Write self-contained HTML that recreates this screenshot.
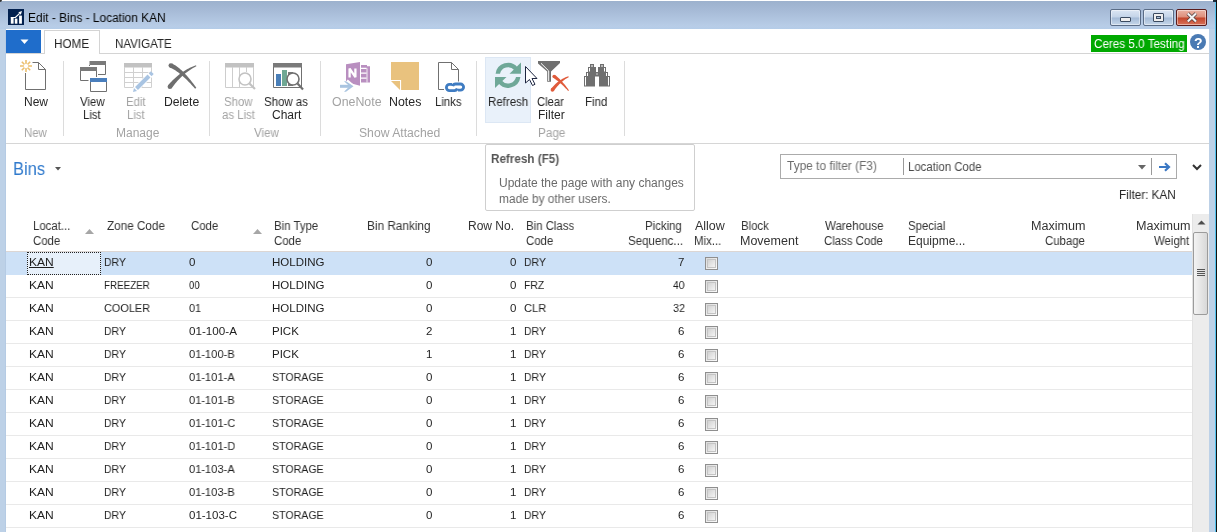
<!DOCTYPE html><html><head><meta charset="utf-8"><style>
*{margin:0;padding:0;box-sizing:border-box}
html,body{width:1217px;height:532px;overflow:hidden}
body{position:relative;font-family:"Liberation Sans",sans-serif;background:#bdd1e7}
.a{position:absolute}
.t{position:absolute;white-space:nowrap;line-height:1;transform-origin:0 0;will-change:transform}
svg{position:absolute;overflow:visible}
</style></head><body>
<div class="a" style="left:0;top:0;width:1217px;height:29px;background:linear-gradient(#9bb0cc,#a6bad6 35%,#b8cde7 90%,#b4cce8)"></div>
<div class="a" style="left:0;top:0;width:1217px;height:1px;background:#fff"></div>
<div class="a" style="left:1215px;top:2px;width:1px;height:530px;background:#52c2ee"></div>
<div class="a" style="left:1216px;top:0;width:1px;height:532px;background:#111"></div>
<div class="a" style="left:0;top:0;width:2px;height:2px;background:#333;border-radius:0 0 2px 0"></div>
<div class="a" style="left:1213px;top:0;width:3px;height:2px;background:#1b2b3b"></div>
<div class="a" style="left:5px;top:29px;width:1px;height:503px;background:#b5cbe4"></div>
<div class="a" style="left:6px;top:29px;width:1203px;height:503px;background:#fff"></div>
<svg style="left:8px;top:9px" width="16" height="16" viewBox="0 0 16 16">
<rect width="16" height="16" fill="#03214f"/>
<rect x="2.8" y="8.4" width="2.8" height="6.3" fill="#fff"/>
<rect x="6.8" y="9.6" width="2.6" height="5.1" fill="#fff"/>
<rect x="11.1" y="6.6" width="2.8" height="8.1" fill="#fff"/>
<path d="M2.8 8.5 H7.4 L11.6 4.3" stroke="#fff" stroke-width="1.2" fill="none"/>
<path d="M10.3 3.3 L14 2 L12.8 5.7 Z" fill="#fff"/>
</svg>
<div class="t" style="left:27.51px;top:12px;font-size:12px;color:#000;transform:scaleX(0.993);">Edit - Bins - Location KAN</div>
<div class="a" style="left:1110px;top:9px;width:31px;height:17px;border:1px solid #5a6c86;border-radius:2px;background:linear-gradient(#dbe6f3 0%,#c3d4e8 48%,#a3bad6 52%,#c6d7ea 100%);box-shadow:inset 0 0 0 1px rgba(255,255,255,0.45)"></div>
<div class="a" style="left:1143px;top:9px;width:31px;height:17px;border:1px solid #5a6c86;border-radius:2px;background:linear-gradient(#dbe6f3 0%,#c3d4e8 48%,#a3bad6 52%,#c6d7ea 100%);box-shadow:inset 0 0 0 1px rgba(255,255,255,0.45)"></div>
<div class="a" style="left:1176px;top:9px;width:31px;height:17px;border:1px solid #5a1c1c;border-radius:2px;background:linear-gradient(#eab3a4 0%,#dd8e7a 48%,#c2442a 52%,#d9735a 100%);box-shadow:inset 0 0 0 1px rgba(255,255,255,0.45)"></div>
<div class="a" style="left:1120px;top:17px;width:11px;height:5px;background:#eeeeee;border:1px solid #3b4b60;border-radius:1px"></div>
<div class="a" style="left:1153px;top:13px;width:11px;height:9px;background:#eeeeee;border:1px solid #3b4b60;border-radius:1px"></div>
<div class="a" style="left:1156px;top:16px;width:5px;height:3px;background:#a9bfd9;border:1px solid #3b4b60"></div>
<svg style="left:1186px;top:12px" width="12" height="11" viewBox="0 0 12 11"><path d="M1.8 1.5 L10 9.5 M10 1.5 L1.8 9.5" stroke="#4a3a3a" stroke-width="3.6"/><path d="M1.8 1.5 L10 9.5 M10 1.5 L1.8 9.5" stroke="#f4f4f4" stroke-width="2.2"/></svg>
<div class="a" style="left:6px;top:53px;width:1203px;height:1px;background:#d4d4d4"></div>
<div class="a" style="left:6px;top:30px;width:35px;height:23px;background:#1f6dcb"></div>
<svg style="left:20px;top:39px" width="9" height="6"><path d="M0.5 0.5 L8.5 0.5 L4.5 5 Z" fill="#fff"/></svg>
<div class="a" style="left:44px;top:30px;width:56px;height:24px;background:#fff;border:1px solid #d4d4d4;border-bottom:none"></div>
<div class="t" style="left:54.06px;top:37.5px;font-size:12.4px;color:#262626;transform:scaleX(0.944);">HOME</div>
<div class="t" style="left:115.07px;top:37.5px;font-size:12.4px;color:#262626;transform:scaleX(0.932);">NAVIGATE</div>
<div class="a" style="left:1091px;top:35px;width:96px;height:17px;background:#00a900"></div>
<div class="t" style="left:1093.53px;top:37.5px;font-size:12px;color:#fff;transform:scaleX(0.973);">Ceres 5.0 Testing</div>
<div class="a" style="left:1190px;top:34px;width:16px;height:16px;border-radius:50%;background:#4a7ab3"></div>
<div class="t" style="left:1193.50px;top:35.5px;font-size:14px;color:#fff;font-weight:bold;">?</div>
<div class="a" style="left:6px;top:143px;width:1203px;height:1px;background:#d6d6d6"></div>
<div class="a" style="left:63px;top:61px;width:1px;height:75px;background:#dcdcdc"></div>
<div class="a" style="left:209px;top:61px;width:1px;height:75px;background:#dcdcdc"></div>
<div class="a" style="left:320px;top:61px;width:1px;height:75px;background:#dcdcdc"></div>
<div class="a" style="left:476px;top:61px;width:1px;height:75px;background:#dcdcdc"></div>
<div class="a" style="left:624px;top:61px;width:1px;height:75px;background:#dcdcdc"></div>
<div class="a" style="left:485px;top:57px;width:46px;height:66px;background:#e9f1fa;border:1px solid #dce7f4"></div>
<div class="t" style="left:24.02px;top:96px;font-size:12px;color:#262626;transform:scaleX(0.983);">New</div>
<div class="t" style="left:80.00px;top:96px;font-size:12px;color:#262626;transform:scaleX(0.950);">View</div>
<div class="t" style="left:82.90px;top:108.5px;font-size:12px;color:#262626;transform:scaleX(0.950);">List</div>
<div class="t" style="left:125.55px;top:96px;font-size:12px;color:#a3a3a3;transform:scaleX(0.950);">Edit</div>
<div class="t" style="left:126.50px;top:108.5px;font-size:12px;color:#a3a3a3;transform:scaleX(0.950);">List</div>
<div class="t" style="left:164.48px;top:96px;font-size:12px;color:#262626;transform:scaleX(1.015);">Delete</div>
<div class="t" style="left:224.28px;top:96px;font-size:12px;color:#a3a3a3;transform:scaleX(0.950);">Show</div>
<div class="t" style="left:222.38px;top:108.5px;font-size:12px;color:#a3a3a3;transform:scaleX(0.950);">as List</div>
<div class="t" style="left:264.04px;top:96px;font-size:12px;color:#262626;transform:scaleX(0.956);">Show as</div>
<div class="t" style="left:272.00px;top:108.5px;font-size:12px;color:#262626;">Chart</div>
<div class="t" style="left:331.50px;top:96px;font-size:12px;color:#a3a3a3;transform:scaleX(1.032);">OneNote</div>
<div class="t" style="left:388.67px;top:96px;font-size:12px;color:#262626;transform:scaleX(1.033);">Notes</div>
<div class="t" style="left:435.45px;top:96px;font-size:12px;color:#262626;transform:scaleX(0.948);">Links</div>
<div class="t" style="left:487.74px;top:96px;font-size:12px;color:#262626;transform:scaleX(0.958);">Refresh</div>
<div class="t" style="left:536.86px;top:96px;font-size:12px;color:#262626;transform:scaleX(0.936);">Clear</div>
<div class="t" style="left:538.01px;top:108.5px;font-size:12px;color:#262626;transform:scaleX(0.992);">Filter</div>
<div class="t" style="left:585.05px;top:96px;font-size:12px;color:#262626;transform:scaleX(0.955);">Find</div>
<div class="t" style="left:24.42px;top:127px;font-size:12px;color:#a3a3a3;transform:scaleX(0.950);">New</div>
<div class="t" style="left:116.00px;top:127px;font-size:12px;color:#a3a3a3;">Manage</div>
<div class="t" style="left:254.00px;top:127px;font-size:12px;color:#a3a3a3;transform:scaleX(0.962);">View</div>
<div class="t" style="left:358.78px;top:127px;font-size:12px;color:#a3a3a3;transform:scaleX(1.015);">Show Attached</div>
<div class="t" style="left:538.42px;top:127px;font-size:12px;color:#a3a3a3;transform:scaleX(0.977);">Page</div>
<svg style="left:0;top:0" width="1217" height="532" viewBox="0 0 1217 532">
<g fill="none" stroke="#707070" stroke-width="1">
 <path d="M25.5 73 V89.5 H45.5 V69.5 L38.5 62.5 H32.5"/>
 <path d="M38.5 62.5 V69.5 H45.5"/>
</g>
<g stroke="#ecc06e" stroke-width="1.6">
 <path d="M26 60 V72 M20 66 H32 M21.8 61.8 L30.2 70.2 M30.2 61.8 L21.8 70.2"/>
</g>
<circle cx="26" cy="66" r="2.2" fill="#fff"/>
<!-- view list -->
<rect x="89.5" y="61" width="16.5" height="4" fill="#7a7a7a"/>
<path d="M105.5 65 V74.5 H98" stroke="#707070" fill="none"/>
<path d="M89.5 65 V66" stroke="#707070"/>
<rect x="80" y="67" width="17" height="4" fill="#7a7a7a"/>
<path d="M80.5 71 V80.5 H88.5 M96.5 71 V77" stroke="#707070" fill="none"/>
<rect x="90" y="78" width="17" height="4" fill="#4a7fbd"/>
<path d="M90.5 82 V91.5 H106.5 V82" stroke="#707070" fill="none"/>
<!-- edit list -->
<rect x="124" y="63" width="28" height="4.5" fill="#c2c2c2"/>
<g stroke="#d0d0d0" fill="none">
 <path d="M124.5 67 V87.5 H151.5 V67 M124.5 72.5 H151.5 M124.5 77.5 H151.5 M124.5 82.5 H151.5 M133.5 67 V87.5 M142.5 67 V87.5"/>
</g>
<path d="M135 90 L151 74" stroke="#fff" stroke-width="6"/>
<path d="M136.5 88.5 L149 76" stroke="#a9c4e2" stroke-width="4"/>
<path d="M150.2 74.8 L152.3 72.7" stroke="#a9c4e2" stroke-width="4"/>
<path d="M133 92 L134 88 L137 91 Z" fill="#a9c4e2"/>
<!-- delete X -->
<path d="M169.89 67.61 L170.73 67.96 L171.59 68.34 L172.47 68.78 L173.38 69.26 L174.30 69.79 L175.24 70.36 L176.20 70.98 L177.17 71.65 L178.17 72.37 L179.18 73.13 L180.21 73.94 L181.26 74.80 L182.32 75.70 L183.40 76.66 L184.50 77.66 L185.61 78.70 L186.74 79.80 L187.88 80.94 L189.04 82.13 L190.22 83.37 L191.41 84.65 L192.61 85.99 L193.83 87.36 L195.07 88.79 L196.33 87.81 L195.23 86.26 L194.13 84.75 L193.04 83.29 L191.96 81.88 L190.89 80.52 L189.83 79.20 L188.77 77.92 L187.72 76.70 L186.68 75.52 L185.64 74.38 L184.61 73.29 L183.59 72.25 L182.57 71.26 L181.56 70.31 L180.56 69.41 L179.56 68.55 L178.56 67.74 L177.57 66.98 L176.59 66.26 L175.61 65.59 L174.63 64.97 L173.65 64.39 L172.68 63.87 L171.71 63.39 Z" fill="#6e6e6e"/>
<circle cx="170.8" cy="65.5" r="2.3" fill="#6e6e6e"/>
<path d="M196.01 65.24 L194.76 65.69 L193.52 66.18 L192.29 66.70 L191.06 67.25 L189.84 67.83 L188.63 68.45 L187.42 69.11 L186.22 69.79 L185.03 70.51 L183.84 71.26 L182.67 72.05 L181.50 72.87 L180.33 73.72 L179.18 74.60 L178.03 75.52 L176.89 76.47 L175.76 77.46 L174.64 78.48 L173.53 79.53 L172.43 80.61 L171.33 81.73 L170.24 82.87 L169.17 84.05 L168.10 85.27 L171.70 88.13 L172.62 86.89 L173.54 85.68 L174.48 84.50 L175.42 83.35 L176.37 82.22 L177.33 81.12 L178.30 80.06 L179.28 79.01 L180.27 78.00 L181.27 77.02 L182.28 76.06 L183.30 75.13 L184.34 74.23 L185.38 73.36 L186.43 72.51 L187.49 71.70 L188.56 70.91 L189.65 70.15 L190.74 69.41 L191.85 68.71 L192.97 68.03 L194.10 67.38 L195.24 66.76 L196.39 66.16 Z" fill="#6e6e6e"/>
<circle cx="169.9" cy="86.7" r="2.3" fill="#6e6e6e"/>
<!-- show as list -->
<rect x="225" y="63" width="29" height="4.5" fill="#c2c2c2"/>
<path d="M225.5 67 V87.5 H253.5 V67 M232.5 67 V87.5 M239.5 67 V87.5 M246.5 67 V72" stroke="#cdcdcd" fill="none"/>
<circle cx="245" cy="79" r="6" fill="#fff" stroke="#c2c2c2" stroke-width="1.6"/>
<path d="M249.5 83.5 L255 89" stroke="#c2c2c2" stroke-width="2.2"/>
<!-- show as chart -->
<rect x="273" y="63" width="29" height="4.5" fill="#7a7a7a"/>
<path d="M273.5 67 V87.5 H301.5 V67" stroke="#707070" fill="none"/>
<rect x="276" y="74" width="5" height="12" fill="#4a7fb8"/>
<rect x="282" y="70" width="5" height="16" fill="#6fa894"/>
<rect x="288" y="72" width="5" height="14" fill="#7a7a7a"/>
<circle cx="293" cy="79" r="6" fill="#fff" stroke="#707070" stroke-width="1.6"/>
<path d="M297.5 83.5 L303 89.5" stroke="#707070" stroke-width="2.2"/>
<!-- onenote -->
<path d="M346 64.3 L360 62 V85.8 L346 82 Z" fill="#b98fc0"/>
<path d="M361 65 H367 V66.2 H370 V82.6 H361 Z" fill="#b98fc0"/>
<path d="M361 68.3 H366.6 M361 73.2 H366.6 M361 78.1 H366.6" stroke="#fff" stroke-width="1.3"/>
<path d="M367 68.3 V82.6" stroke="#fff" stroke-width="0.8"/>
<path d="M349.6 77.5 V68.6 L355.4 77.2 V68.6" stroke="#fff" stroke-width="2.3" fill="none" stroke-linejoin="bevel"/>
<path d="M340 86.3 H351 M346 81.5 L351.5 86.3 L346 91.3" stroke="#fff" stroke-width="5.5" fill="none"/>
<path d="M340 86.3 H351" stroke="#a9c4e0" stroke-width="3"/>
<path d="M346 81.3 L353.5 86.3 L346 91.8 L344 91.8 L349.5 86.3 L344 81.3 Z" fill="#a9c4e0"/>
<!-- notes -->
<path d="M391 62 H419 V90 H401 L391 80 Z" fill="#e9c27e"/>
<path d="M391 80.5 H400.5 V90" stroke="#fff" stroke-width="1.2" fill="none"/>
<path d="M391 81 H400 V90 Z" fill="#e9c27e"/>
<!-- links -->
<path d="M444 89.5 H438.5 V62.5 H451.5 L458.5 69.5 V81.5" stroke="#707070" fill="none"/>
<path d="M451.5 62.5 V69.5 H458.5" stroke="#707070" fill="none"/>
<path d="M452 84.4 H449.5 A3.1 3.1 0 0 0 449.5 90.6 H454.5 A3.1 3.1 0 0 0 457.3 88.5" stroke="#3f7cc2" stroke-width="2.8" fill="none"/>
<path d="M458 90.2 H460.5 A3.1 3.1 0 0 0 460.5 84 H455.5 A3.1 3.1 0 0 0 452.7 86.1" stroke="#3f7cc2" stroke-width="2.8" fill="none"/>
<!-- refresh -->
<g fill="#6fa898">
<path d="M495.6 73.7 A12.5 12.5 0 0 1 517.6 67.4 L514.3 70.1 A8.2 8.2 0 0 0 500 73.7 Z"/>
<path d="M521 62.6 V73.7 H509.5 Z"/>
<path d="M520.4 77 A12.5 12.5 0 0 1 498.4 83.3 L501.7 80.6 A8.2 8.2 0 0 0 516 77 Z"/>
<path d="M495 88.1 V77 H506.5 Z"/>
</g>
<!-- cursor -->
<path d="M525.5 66.5 V83 L529.5 79.5 L532.5 85.5 L535 84.3 L532 78.5 L537 78.5 Z" fill="#fff" stroke="#1d2540" stroke-width="1"/>
<!-- funnel -->
<path d="M538 61 H560 V63 L551 71.5 V81.7 H547.2 V71.5 L538 63.5 Z" fill="#6f6f6f"/>
<path d="M541 63.3 L548.7 70.9 V81" stroke="#fff" stroke-width="1" fill="none"/>
<!-- red x -->
<path d="M553.16 77.81 L553.66 78.12 L554.18 78.45 L554.71 78.80 L555.24 79.17 L555.79 79.56 L556.35 79.97 L556.93 80.40 L557.51 80.86 L558.10 81.33 L558.70 81.82 L559.32 82.34 L559.94 82.88 L560.58 83.43 L561.22 84.01 L561.88 84.61 L562.54 85.23 L563.22 85.87 L563.90 86.53 L564.59 87.21 L565.30 87.91 L566.01 88.63 L566.74 89.37 L567.47 90.13 L568.21 90.92 L568.99 90.28 L568.34 89.40 L567.71 88.54 L567.08 87.71 L566.46 86.89 L565.84 86.10 L565.22 85.32 L564.62 84.57 L564.01 83.84 L563.42 83.13 L562.83 82.44 L562.24 81.77 L561.66 81.12 L561.08 80.50 L560.51 79.89 L559.94 79.31 L559.38 78.74 L558.82 78.20 L558.27 77.68 L557.72 77.18 L557.18 76.70 L556.64 76.24 L556.10 75.80 L555.57 75.38 L555.04 74.99 Z" fill="#e05b3b"/><circle cx="554.1" cy="76.4" r="1.7" fill="#e05b3b"/>
<path d="M568.43 76.33 L567.69 76.54 L566.94 76.78 L566.20 77.05 L565.45 77.35 L564.71 77.67 L563.97 78.02 L563.23 78.39 L562.49 78.79 L561.75 79.22 L561.01 79.68 L560.28 80.16 L559.55 80.67 L558.82 81.20 L558.09 81.76 L557.36 82.35 L556.64 82.96 L555.92 83.60 L555.20 84.27 L554.49 84.96 L553.78 85.68 L553.07 86.42 L552.37 87.19 L551.67 87.99 L550.97 88.81 L553.83 90.99 L554.42 90.16 L555.01 89.36 L555.60 88.57 L556.20 87.81 L556.80 87.07 L557.40 86.36 L558.00 85.66 L558.60 84.99 L559.21 84.34 L559.82 83.72 L560.44 83.11 L561.05 82.53 L561.67 81.97 L562.30 81.44 L562.93 80.92 L563.56 80.43 L564.19 79.96 L564.83 79.51 L565.48 79.08 L566.12 78.68 L566.78 78.29 L567.44 77.93 L568.10 77.59 L568.77 77.27 Z" fill="#e05b3b"/><circle cx="552.4" cy="89.9" r="1.8" fill="#e05b3b"/>
<!-- binoculars -->
<path d="M584 86.5 V76 H586 V72 H588 V67 H590 V64 H594 V67 H596 V72 H598 V67 H600 V64 H604 V67 H606 V72 H608 V76 H610 V86.5 H599 V76.5 H595 V86.5 Z" fill="#6f6f6f"/>
<g stroke="#fff" stroke-width="1" fill="none">
<path d="M585.5 77 V85.5 M587.5 73 V76 M589.5 68 V71.5 M608.5 77 V85.5 M606.5 73 V76 M604.5 68 V71.5"/>
<path d="M591 66 H593 M601 66 H603 M596.3 74 H597.7"/>
</g>
</svg>
<div class="t" style="left:13.28px;top:159.5px;font-size:18px;color:#2f79cc;transform:scaleX(0.918);">Bins</div>
<svg style="left:55px;top:167px" width="6" height="4"><path d="M0 0 H6 L3 3.5 Z" fill="#555"/></svg>
<div class="a" style="left:780px;top:154px;width:397px;height:25px;border:1px solid #ababab;background:#fff"></div>
<div class="t" style="left:787.30px;top:159.5px;font-size:12px;color:#6b6b6b;transform:scaleX(0.991);">Type to filter (F3)</div>
<div class="a" style="left:903px;top:158px;width:1px;height:17px;background:#9a9a9a"></div>
<div class="t" style="left:908.45px;top:160.5px;font-size:12px;color:#4a4a4a;transform:scaleX(0.950);">Location Code</div>
<svg style="left:1138px;top:165px" width="8" height="5"><path d="M0 0 H8 L4 4.5 Z" fill="#666"/></svg>
<div class="a" style="left:1151px;top:158px;width:1px;height:17px;background:#9a9a9a"></div>
<svg style="left:1158px;top:162px" width="13" height="10"><path d="M1 5 H11 M7 1.2 L11 5 L7 8.8" stroke="#3b78c4" stroke-width="2.2" fill="none"/></svg>
<svg style="left:1192px;top:164px" width="10" height="7"><path d="M1 1 L5 5 L9 1" stroke="#333" stroke-width="2" fill="none"/></svg>
<div class="t" style="left:1118.52px;top:188.5px;font-size:12px;color:#262626;transform:scaleX(0.980);">Filter: KAN</div>
<div class="t" style="left:32.55px;top:220px;font-size:12px;color:#333333;transform:scaleX(0.950);">Locat...</div>
<div class="t" style="left:32.55px;top:235px;font-size:12px;color:#333333;transform:scaleX(0.950);">Code</div>
<div class="t" style="left:106.80px;top:220px;font-size:12px;color:#333333;transform:scaleX(0.975);">Zone Code</div>
<div class="t" style="left:190.75px;top:220px;font-size:12px;color:#333333;transform:scaleX(0.950);">Code</div>
<div class="t" style="left:274.35px;top:220px;font-size:12px;color:#333333;transform:scaleX(0.950);">Bin Type</div>
<div class="t" style="left:274.35px;top:235px;font-size:12px;color:#333333;transform:scaleX(0.950);">Code</div>
<div class="t" style="left:366.52px;top:220px;font-size:12px;color:#333333;transform:scaleX(0.983);">Bin Ranking</div>
<div class="t" style="left:468.40px;top:220px;font-size:12px;color:#333333;">Row No.</div>
<div class="t" style="left:526.35px;top:220px;font-size:12px;color:#333333;transform:scaleX(0.950);">Bin Class</div>
<div class="t" style="left:526.35px;top:235px;font-size:12px;color:#333333;transform:scaleX(0.950);">Code</div>
<div class="t" style="left:645.20px;top:220px;font-size:12px;color:#333333;transform:scaleX(0.950);">Picking</div>
<div class="t" style="left:627.54px;top:235px;font-size:12px;color:#333333;transform:scaleX(0.960);">Sequenc...</div>
<div class="t" style="left:694.90px;top:220px;font-size:12px;color:#333333;transform:scaleX(1.038);">Allow</div>
<div class="t" style="left:693.95px;top:235px;font-size:12px;color:#333333;transform:scaleX(0.950);">Mix...</div>
<div class="t" style="left:740.55px;top:220px;font-size:12px;color:#333333;transform:scaleX(0.950);">Block</div>
<div class="t" style="left:740.46px;top:235px;font-size:12px;color:#333333;transform:scaleX(1.042);">Movement</div>
<div class="t" style="left:825.40px;top:220px;font-size:12px;color:#333333;transform:scaleX(0.960);">Warehouse</div>
<div class="t" style="left:824.45px;top:235px;font-size:12px;color:#333333;transform:scaleX(0.950);">Class Code</div>
<div class="t" style="left:908.35px;top:220px;font-size:12px;color:#333333;transform:scaleX(0.950);">Special</div>
<div class="t" style="left:908.31px;top:235px;font-size:12px;color:#333333;transform:scaleX(0.995);">Equipme...</div>
<div class="t" style="left:1030.65px;top:220px;font-size:12px;color:#333333;transform:scaleX(1.050);">Maximum</div>
<div class="t" style="left:1045.25px;top:235px;font-size:12px;color:#333333;transform:scaleX(0.950);">Cubage</div>
<div class="t" style="left:1135.85px;top:220px;font-size:12px;color:#333333;transform:scaleX(1.050);">Maximum</div>
<div class="t" style="left:1154.25px;top:235px;font-size:12px;color:#333333;transform:scaleX(0.950);">Weight</div>
<svg style="left:85px;top:229px" width="9" height="5"><path d="M0 5 L4.5 0 L9 5 Z" fill="#a6a6a6"/></svg>
<svg style="left:253px;top:229px" width="9" height="5"><path d="M0 5 L4.5 0 L9 5 Z" fill="#a6a6a6"/></svg>
<div class="a" style="left:6px;top:251px;width:1186px;height:1px;background:#dcd6d3"></div>
<div class="a" style="left:6px;top:252px;width:1186px;height:23px;background:#cde1f7"></div>
<div class="a" style="left:27px;top:252px;width:74px;height:23px;background:#e7f0fa;border:1px dotted #222"></div>
<div class="t" style="left:29.45px;top:257px;font-size:11.5px;color:#1e1e1e;transform:scaleX(1.045);text-decoration:underline;">KAN</div>
<div class="t" style="left:103.69px;top:257px;font-size:11.5px;color:#1e1e1e;transform:scaleX(0.909);">DRY</div>
<div class="t" style="left:188.50px;top:257px;font-size:11.5px;color:#1e1e1e;">0</div>
<div class="t" style="left:271.61px;top:257px;font-size:11.5px;color:#1e1e1e;transform:scaleX(0.994);">HOLDING</div>
<div class="t" style="left:426.20px;top:257px;font-size:11.5px;color:#1e1e1e;">0</div>
<div class="t" style="left:510.40px;top:257px;font-size:11.5px;color:#1e1e1e;">0</div>
<div class="t" style="left:523.69px;top:257px;font-size:11.5px;color:#1e1e1e;transform:scaleX(0.909);">DRY</div>
<div class="t" style="left:678.40px;top:257px;font-size:11.5px;color:#1e1e1e;">7</div>
<div class="a" style="left:705px;top:257px;width:13px;height:13px;border:1px solid #8f8f8f;background:linear-gradient(135deg,#dcdcdc,#fbfbfb)"></div>
<div class="a" style="left:707px;top:259px;width:9px;height:9px;border:1px solid #c4c4c4;background:linear-gradient(135deg,#d2d2d2,#f4f4f4)"></div>
<div class="a" style="left:6px;top:297px;width:1186px;height:1px;background:#e9e9e9"></div>
<div class="t" style="left:29.45px;top:280px;font-size:11.5px;color:#1e1e1e;transform:scaleX(1.045);">KAN</div>
<div class="t" style="left:103.75px;top:280px;font-size:11.5px;color:#1e1e1e;transform:scaleX(0.854);">FREEZER</div>
<div class="t" style="left:188.50px;top:280px;font-size:11.5px;color:#1e1e1e;transform:scaleX(0.823);">00</div>
<div class="t" style="left:271.61px;top:280px;font-size:11.5px;color:#1e1e1e;transform:scaleX(0.994);">HOLDING</div>
<div class="t" style="left:426.20px;top:280px;font-size:11.5px;color:#1e1e1e;">0</div>
<div class="t" style="left:510.40px;top:280px;font-size:11.5px;color:#1e1e1e;">0</div>
<div class="t" style="left:523.70px;top:280px;font-size:11.5px;color:#1e1e1e;transform:scaleX(0.905);">FRZ</div>
<div class="t" style="left:672.90px;top:280px;font-size:11.5px;color:#1e1e1e;transform:scaleX(0.885);">40</div>
<div class="a" style="left:705px;top:280px;width:13px;height:13px;border:1px solid #8f8f8f;background:linear-gradient(135deg,#dcdcdc,#fbfbfb)"></div>
<div class="a" style="left:707px;top:282px;width:9px;height:9px;border:1px solid #c4c4c4;background:linear-gradient(135deg,#d2d2d2,#f4f4f4)"></div>
<div class="a" style="left:6px;top:320px;width:1186px;height:1px;background:#e9e9e9"></div>
<div class="t" style="left:29.45px;top:303px;font-size:11.5px;color:#1e1e1e;transform:scaleX(1.045);">KAN</div>
<div class="t" style="left:103.65px;top:303px;font-size:11.5px;color:#1e1e1e;transform:scaleX(0.949);">COOLER</div>
<div class="t" style="left:188.50px;top:303px;font-size:11.5px;color:#1e1e1e;transform:scaleX(0.942);">01</div>
<div class="t" style="left:271.61px;top:303px;font-size:11.5px;color:#1e1e1e;transform:scaleX(0.994);">HOLDING</div>
<div class="t" style="left:426.20px;top:303px;font-size:11.5px;color:#1e1e1e;">0</div>
<div class="t" style="left:510.40px;top:303px;font-size:11.5px;color:#1e1e1e;">0</div>
<div class="t" style="left:523.63px;top:303px;font-size:11.5px;color:#1e1e1e;transform:scaleX(0.967);">CLR</div>
<div class="t" style="left:673.16px;top:303px;font-size:11.5px;color:#1e1e1e;transform:scaleX(0.936);">32</div>
<div class="a" style="left:705px;top:303px;width:13px;height:13px;border:1px solid #8f8f8f;background:linear-gradient(135deg,#dcdcdc,#fbfbfb)"></div>
<div class="a" style="left:707px;top:305px;width:9px;height:9px;border:1px solid #c4c4c4;background:linear-gradient(135deg,#d2d2d2,#f4f4f4)"></div>
<div class="a" style="left:6px;top:343px;width:1186px;height:1px;background:#e9e9e9"></div>
<div class="t" style="left:29.45px;top:326px;font-size:11.5px;color:#1e1e1e;transform:scaleX(1.045);">KAN</div>
<div class="t" style="left:103.69px;top:326px;font-size:11.5px;color:#1e1e1e;transform:scaleX(0.909);">DRY</div>
<div class="t" style="left:188.50px;top:326px;font-size:11.5px;color:#1e1e1e;transform:scaleX(1.015);">01-100-A</div>
<div class="t" style="left:271.61px;top:326px;font-size:11.5px;color:#1e1e1e;transform:scaleX(0.988);">PICK</div>
<div class="t" style="left:426.20px;top:326px;font-size:11.5px;color:#1e1e1e;">2</div>
<div class="t" style="left:510.40px;top:326px;font-size:11.5px;color:#1e1e1e;">1</div>
<div class="t" style="left:523.69px;top:326px;font-size:11.5px;color:#1e1e1e;transform:scaleX(0.909);">DRY</div>
<div class="t" style="left:678.40px;top:326px;font-size:11.5px;color:#1e1e1e;">6</div>
<div class="a" style="left:705px;top:326px;width:13px;height:13px;border:1px solid #8f8f8f;background:linear-gradient(135deg,#dcdcdc,#fbfbfb)"></div>
<div class="a" style="left:707px;top:328px;width:9px;height:9px;border:1px solid #c4c4c4;background:linear-gradient(135deg,#d2d2d2,#f4f4f4)"></div>
<div class="a" style="left:6px;top:366px;width:1186px;height:1px;background:#e9e9e9"></div>
<div class="t" style="left:29.45px;top:349px;font-size:11.5px;color:#1e1e1e;transform:scaleX(1.045);">KAN</div>
<div class="t" style="left:103.69px;top:349px;font-size:11.5px;color:#1e1e1e;transform:scaleX(0.909);">DRY</div>
<div class="t" style="left:188.50px;top:349px;font-size:11.5px;color:#1e1e1e;transform:scaleX(0.965);">01-100-B</div>
<div class="t" style="left:271.61px;top:349px;font-size:11.5px;color:#1e1e1e;transform:scaleX(0.988);">PICK</div>
<div class="t" style="left:426.20px;top:349px;font-size:11.5px;color:#1e1e1e;">1</div>
<div class="t" style="left:510.40px;top:349px;font-size:11.5px;color:#1e1e1e;">1</div>
<div class="t" style="left:523.69px;top:349px;font-size:11.5px;color:#1e1e1e;transform:scaleX(0.909);">DRY</div>
<div class="t" style="left:678.40px;top:349px;font-size:11.5px;color:#1e1e1e;">6</div>
<div class="a" style="left:705px;top:349px;width:13px;height:13px;border:1px solid #8f8f8f;background:linear-gradient(135deg,#dcdcdc,#fbfbfb)"></div>
<div class="a" style="left:707px;top:351px;width:9px;height:9px;border:1px solid #c4c4c4;background:linear-gradient(135deg,#d2d2d2,#f4f4f4)"></div>
<div class="a" style="left:6px;top:389px;width:1186px;height:1px;background:#e9e9e9"></div>
<div class="t" style="left:29.45px;top:372px;font-size:11.5px;color:#1e1e1e;transform:scaleX(1.045);">KAN</div>
<div class="t" style="left:103.69px;top:372px;font-size:11.5px;color:#1e1e1e;transform:scaleX(0.909);">DRY</div>
<div class="t" style="left:188.50px;top:372px;font-size:11.5px;color:#1e1e1e;transform:scaleX(0.965);">01-101-A</div>
<div class="t" style="left:271.68px;top:372px;font-size:11.5px;color:#1e1e1e;transform:scaleX(0.922);">STORAGE</div>
<div class="t" style="left:426.20px;top:372px;font-size:11.5px;color:#1e1e1e;">0</div>
<div class="t" style="left:510.40px;top:372px;font-size:11.5px;color:#1e1e1e;">1</div>
<div class="t" style="left:523.69px;top:372px;font-size:11.5px;color:#1e1e1e;transform:scaleX(0.909);">DRY</div>
<div class="t" style="left:678.40px;top:372px;font-size:11.5px;color:#1e1e1e;">6</div>
<div class="a" style="left:705px;top:372px;width:13px;height:13px;border:1px solid #8f8f8f;background:linear-gradient(135deg,#dcdcdc,#fbfbfb)"></div>
<div class="a" style="left:707px;top:374px;width:9px;height:9px;border:1px solid #c4c4c4;background:linear-gradient(135deg,#d2d2d2,#f4f4f4)"></div>
<div class="a" style="left:6px;top:412px;width:1186px;height:1px;background:#e9e9e9"></div>
<div class="t" style="left:29.45px;top:395px;font-size:11.5px;color:#1e1e1e;transform:scaleX(1.045);">KAN</div>
<div class="t" style="left:103.69px;top:395px;font-size:11.5px;color:#1e1e1e;transform:scaleX(0.909);">DRY</div>
<div class="t" style="left:188.50px;top:395px;font-size:11.5px;color:#1e1e1e;transform:scaleX(0.965);">01-101-B</div>
<div class="t" style="left:271.68px;top:395px;font-size:11.5px;color:#1e1e1e;transform:scaleX(0.922);">STORAGE</div>
<div class="t" style="left:426.20px;top:395px;font-size:11.5px;color:#1e1e1e;">0</div>
<div class="t" style="left:510.40px;top:395px;font-size:11.5px;color:#1e1e1e;">1</div>
<div class="t" style="left:523.69px;top:395px;font-size:11.5px;color:#1e1e1e;transform:scaleX(0.909);">DRY</div>
<div class="t" style="left:678.40px;top:395px;font-size:11.5px;color:#1e1e1e;">6</div>
<div class="a" style="left:705px;top:395px;width:13px;height:13px;border:1px solid #8f8f8f;background:linear-gradient(135deg,#dcdcdc,#fbfbfb)"></div>
<div class="a" style="left:707px;top:397px;width:9px;height:9px;border:1px solid #c4c4c4;background:linear-gradient(135deg,#d2d2d2,#f4f4f4)"></div>
<div class="a" style="left:6px;top:435px;width:1186px;height:1px;background:#e9e9e9"></div>
<div class="t" style="left:29.45px;top:418px;font-size:11.5px;color:#1e1e1e;transform:scaleX(1.045);">KAN</div>
<div class="t" style="left:103.69px;top:418px;font-size:11.5px;color:#1e1e1e;transform:scaleX(0.909);">DRY</div>
<div class="t" style="left:188.50px;top:418px;font-size:11.5px;color:#1e1e1e;transform:scaleX(0.965);">01-101-C</div>
<div class="t" style="left:271.68px;top:418px;font-size:11.5px;color:#1e1e1e;transform:scaleX(0.922);">STORAGE</div>
<div class="t" style="left:426.20px;top:418px;font-size:11.5px;color:#1e1e1e;">0</div>
<div class="t" style="left:510.40px;top:418px;font-size:11.5px;color:#1e1e1e;">1</div>
<div class="t" style="left:523.69px;top:418px;font-size:11.5px;color:#1e1e1e;transform:scaleX(0.909);">DRY</div>
<div class="t" style="left:678.40px;top:418px;font-size:11.5px;color:#1e1e1e;">6</div>
<div class="a" style="left:705px;top:418px;width:13px;height:13px;border:1px solid #8f8f8f;background:linear-gradient(135deg,#dcdcdc,#fbfbfb)"></div>
<div class="a" style="left:707px;top:420px;width:9px;height:9px;border:1px solid #c4c4c4;background:linear-gradient(135deg,#d2d2d2,#f4f4f4)"></div>
<div class="a" style="left:6px;top:458px;width:1186px;height:1px;background:#e9e9e9"></div>
<div class="t" style="left:29.45px;top:441px;font-size:11.5px;color:#1e1e1e;transform:scaleX(1.045);">KAN</div>
<div class="t" style="left:103.69px;top:441px;font-size:11.5px;color:#1e1e1e;transform:scaleX(0.909);">DRY</div>
<div class="t" style="left:188.50px;top:441px;font-size:11.5px;color:#1e1e1e;transform:scaleX(0.965);">01-101-D</div>
<div class="t" style="left:271.68px;top:441px;font-size:11.5px;color:#1e1e1e;transform:scaleX(0.922);">STORAGE</div>
<div class="t" style="left:426.20px;top:441px;font-size:11.5px;color:#1e1e1e;">0</div>
<div class="t" style="left:510.40px;top:441px;font-size:11.5px;color:#1e1e1e;">1</div>
<div class="t" style="left:523.69px;top:441px;font-size:11.5px;color:#1e1e1e;transform:scaleX(0.909);">DRY</div>
<div class="t" style="left:678.40px;top:441px;font-size:11.5px;color:#1e1e1e;">6</div>
<div class="a" style="left:705px;top:441px;width:13px;height:13px;border:1px solid #8f8f8f;background:linear-gradient(135deg,#dcdcdc,#fbfbfb)"></div>
<div class="a" style="left:707px;top:443px;width:9px;height:9px;border:1px solid #c4c4c4;background:linear-gradient(135deg,#d2d2d2,#f4f4f4)"></div>
<div class="a" style="left:6px;top:481px;width:1186px;height:1px;background:#e9e9e9"></div>
<div class="t" style="left:29.45px;top:464px;font-size:11.5px;color:#1e1e1e;transform:scaleX(1.045);">KAN</div>
<div class="t" style="left:103.69px;top:464px;font-size:11.5px;color:#1e1e1e;transform:scaleX(0.909);">DRY</div>
<div class="t" style="left:188.50px;top:464px;font-size:11.5px;color:#1e1e1e;transform:scaleX(0.965);">01-103-A</div>
<div class="t" style="left:271.68px;top:464px;font-size:11.5px;color:#1e1e1e;transform:scaleX(0.922);">STORAGE</div>
<div class="t" style="left:426.20px;top:464px;font-size:11.5px;color:#1e1e1e;">0</div>
<div class="t" style="left:510.40px;top:464px;font-size:11.5px;color:#1e1e1e;">1</div>
<div class="t" style="left:523.69px;top:464px;font-size:11.5px;color:#1e1e1e;transform:scaleX(0.909);">DRY</div>
<div class="t" style="left:678.40px;top:464px;font-size:11.5px;color:#1e1e1e;">6</div>
<div class="a" style="left:705px;top:464px;width:13px;height:13px;border:1px solid #8f8f8f;background:linear-gradient(135deg,#dcdcdc,#fbfbfb)"></div>
<div class="a" style="left:707px;top:466px;width:9px;height:9px;border:1px solid #c4c4c4;background:linear-gradient(135deg,#d2d2d2,#f4f4f4)"></div>
<div class="a" style="left:6px;top:504px;width:1186px;height:1px;background:#e9e9e9"></div>
<div class="t" style="left:29.45px;top:487px;font-size:11.5px;color:#1e1e1e;transform:scaleX(1.045);">KAN</div>
<div class="t" style="left:103.69px;top:487px;font-size:11.5px;color:#1e1e1e;transform:scaleX(0.909);">DRY</div>
<div class="t" style="left:188.50px;top:487px;font-size:11.5px;color:#1e1e1e;transform:scaleX(0.965);">01-103-B</div>
<div class="t" style="left:271.68px;top:487px;font-size:11.5px;color:#1e1e1e;transform:scaleX(0.922);">STORAGE</div>
<div class="t" style="left:426.20px;top:487px;font-size:11.5px;color:#1e1e1e;">0</div>
<div class="t" style="left:510.40px;top:487px;font-size:11.5px;color:#1e1e1e;">1</div>
<div class="t" style="left:523.69px;top:487px;font-size:11.5px;color:#1e1e1e;transform:scaleX(0.909);">DRY</div>
<div class="t" style="left:678.40px;top:487px;font-size:11.5px;color:#1e1e1e;">6</div>
<div class="a" style="left:705px;top:487px;width:13px;height:13px;border:1px solid #8f8f8f;background:linear-gradient(135deg,#dcdcdc,#fbfbfb)"></div>
<div class="a" style="left:707px;top:489px;width:9px;height:9px;border:1px solid #c4c4c4;background:linear-gradient(135deg,#d2d2d2,#f4f4f4)"></div>
<div class="a" style="left:6px;top:527px;width:1186px;height:1px;background:#e9e9e9"></div>
<div class="t" style="left:29.45px;top:510px;font-size:11.5px;color:#1e1e1e;transform:scaleX(1.045);">KAN</div>
<div class="t" style="left:103.69px;top:510px;font-size:11.5px;color:#1e1e1e;transform:scaleX(0.909);">DRY</div>
<div class="t" style="left:188.50px;top:510px;font-size:11.5px;color:#1e1e1e;transform:scaleX(0.991);">01-103-C</div>
<div class="t" style="left:271.68px;top:510px;font-size:11.5px;color:#1e1e1e;transform:scaleX(0.922);">STORAGE</div>
<div class="t" style="left:426.20px;top:510px;font-size:11.5px;color:#1e1e1e;">0</div>
<div class="t" style="left:510.40px;top:510px;font-size:11.5px;color:#1e1e1e;">1</div>
<div class="t" style="left:523.69px;top:510px;font-size:11.5px;color:#1e1e1e;transform:scaleX(0.909);">DRY</div>
<div class="t" style="left:678.40px;top:510px;font-size:11.5px;color:#1e1e1e;">6</div>
<div class="a" style="left:705px;top:510px;width:13px;height:13px;border:1px solid #8f8f8f;background:linear-gradient(135deg,#dcdcdc,#fbfbfb)"></div>
<div class="a" style="left:707px;top:512px;width:9px;height:9px;border:1px solid #c4c4c4;background:linear-gradient(135deg,#d2d2d2,#f4f4f4)"></div>
<div class="a" style="left:1192px;top:214px;width:17px;height:318px;background:#ececec;border-left:1px solid #e2e2e2"></div>
<svg style="left:1197px;top:220px" width="9" height="5"><path d="M0.5 4.5 L4.5 0.5 L8.5 4.5 Z" fill="#4d4d4d"/></svg>
<div class="a" style="left:1193px;top:232px;width:15px;height:83px;border:1px solid #9b9b9b;border-radius:2px;background:linear-gradient(90deg,#f3f3f3,#e6e6e6 50%,#d8d8d8)"></div>
<div class="a" style="left:1197px;top:269px;width:8px;height:8px;background:repeating-linear-gradient(#555 0 1px,transparent 1px 2px)"></div>
<div class="a" style="left:485px;top:144px;width:210px;height:67px;border:1px solid #cfcfcf;border-radius:2px;background:#fff"></div>
<div class="t" style="left:490.83px;top:153px;font-size:12px;color:#555;transform:scaleX(0.974);font-weight:bold;">Refresh (F5)</div>
<div class="t" style="left:498.50px;top:177px;font-size:12px;color:#6a6a6a;">Update the page with any changes</div>
<div class="t" style="left:498.51px;top:192.8px;font-size:12px;color:#6a6a6a;transform:scaleX(0.990);">made by other users.</div></body></html>
